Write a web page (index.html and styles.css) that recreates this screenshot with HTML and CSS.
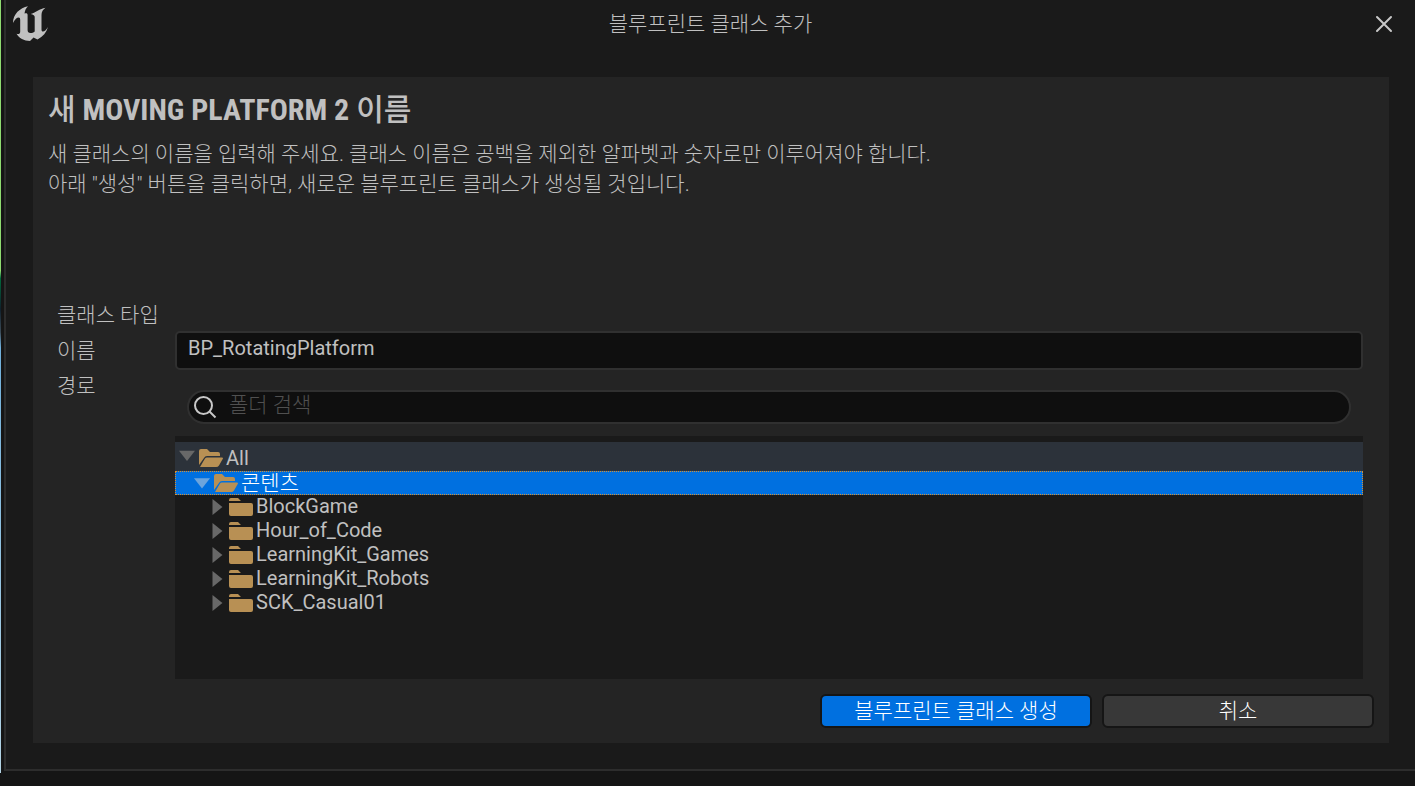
FILE: index.html
```
<!DOCTYPE html>
<html lang="ko">
<head>
  <meta charset="UTF-8">
  <meta name="viewport" content="width=device-width, initial-scale=1.0">
  <title>블루프린트 클래스 추가</title>
  <link rel="stylesheet" href="styles.css">
</head>
<body>
  <!-- shared icons -->
  <svg class="sprite" aria-hidden="true">
    <symbol id="folder" viewBox="0 0 24 18">
      <path d="M0 2Q0 0 2 0H9L12 3H0ZM0 5H22Q24 5 24 7V16Q24 18 22 18H2Q0 18 0 16Z"/>
    </symbol>
    <symbol id="folder-open" viewBox="0 0 24 18">
      <path d="M0 2Q0 0 2 0H8L11 3H19Q21 3 21 5V7H8Q6 7 5 9L0 16ZM8 8.5H23Q24.500 8.500 23.700 10L20 16.500Q19 18 17 18H1L6 9.500Q6.700 8.500 8 8.500Z"/>
    </symbol>
  </svg>

  <div class="window">
    <header class="titlebar">
      <svg class="logo" viewBox="0 0 35 36" aria-hidden="true">
        <path d="M15 0.300C7 2 0 8 0 17C2 13 4 11.500 5.500 11.500C6.800 11.500 7.200 12.300 7.200 14V25.500C7.200 28 5.500 28.500 3.500 27.800C6 32 11 35 17 35L20.500 31.500L24.500 33.500C30 30.500 33.500 26.500 35 21C33 24 31.500 25.500 30 25.500C29 25.500 28.500 25 28.500 23.500V9C28.500 6 30 3.500 32.500 1.800C27 2.500 22 7 17.700 8C20.500 8.500 21.700 9.500 21.700 11V25.500C20.500 26.500 19 27 17.500 27C15.500 27 14.600 26 14.600 24V9C14.600 7.300 13.500 6.800 11.500 7.500C12 4.500 13 2 15 0.300Z"/>
      </svg>
      <span class="caption">블루프린트 클래스 추가</span>
      <button class="close-button" type="button" aria-label="닫기">
        <svg viewBox="0 0 18 18"><path d="M2 2L16 16M16 2L2 16"/></svg>
      </button>
    </header>

    <form class="panel">
      <h1>새 <strong>MOVING PLATFORM 2</strong> 이름</h1>
      <p class="intro">
        새 클래스의 이름을 입력해 주세요. 클래스 이름은 공백을 제외한 알파벳과 숫자로만 이루어져야 합니다.<br>
        아래 "생성" 버튼을 클릭하면, 새로운 블루프린트 클래스가 생성될 것입니다.
      </p>

      <div class="fields">
        <span class="label type-label">클래스 타입</span>
        <label class="label" for="class-name">이름</label>
        <input class="name-input" id="class-name" type="text" value="BP_RotatingPlatform">
        <label class="label path-label" for="folder-search">경로</label>
        <div class="path-picker">
          <div class="search">
            <svg viewBox="0 0 24 24" aria-hidden="true"><circle cx="10.500" cy="10.500" r="8.500"/><path d="M16.500 16.500L22.500 22.500"/></svg>
            <input id="folder-search" type="text" placeholder="폴더 검색">
          </div>
          <ul class="tree">
            <li class="row root">
              <button class="arrow open" type="button" aria-label="All 접기"></button>
              <svg class="folder"><use href="#folder-open"/></svg><span>All</span>
            </li>
            <li class="row content selected">
              <button class="arrow open" type="button" aria-label="콘텐츠 접기"></button>
              <svg class="folder"><use href="#folder-open"/></svg><span>콘텐츠</span>
            </li>
            <li class="row child">
              <button class="arrow" type="button" aria-label="BlockGame 펼치기"></button>
              <svg class="folder"><use href="#folder"/></svg><span>BlockGame</span>
            </li>
            <li class="row child">
              <button class="arrow" type="button" aria-label="Hour_of_Code 펼치기"></button>
              <svg class="folder"><use href="#folder"/></svg><span>Hour_of_Code</span>
            </li>
            <li class="row child">
              <button class="arrow" type="button" aria-label="LearningKit_Games 펼치기"></button>
              <svg class="folder"><use href="#folder"/></svg><span>LearningKit_Games</span>
            </li>
            <li class="row child">
              <button class="arrow" type="button" aria-label="LearningKit_Robots 펼치기"></button>
              <svg class="folder"><use href="#folder"/></svg><span>LearningKit_Robots</span>
            </li>
            <li class="row child">
              <button class="arrow" type="button" aria-label="SCK_Casual01 펼치기"></button>
              <svg class="folder"><use href="#folder"/></svg><span>SCK_Casual01</span>
            </li>
          </ul>
        </div>
      </div>

      <div class="actions">
        <button class="button primary" type="button">블루프린트 클래스 생성</button>
        <button class="button" type="button">취소</button>
      </div>
    </form>
  </div>
</body>
</html>
```
FILE: styles.css
```
* {
  box-sizing: border-box;
}

body {
  margin: 0;
  min-height: 100vh;
  display: flex;
  flex-direction: column;
  padding-bottom: 15px;
  background: #151515;
  color: #c0c0c0;
  font-family: Roboto, "Noto Sans CJK KR", sans-serif;
  font-size: 21px;
  font-weight: 300;
  line-height: 30px;
}

/* editor viewport showing behind the window */
body::before {
  content: "";
  position: absolute;
  left: 0;
  top: 0;
  width: 1px;
  height: calc(100vh - 13px);
  background: linear-gradient(#8fdc70 35%, #00693c 36%, #10202c 40%, #3c4c58 43%, #70b0dc 45%, #b4d4e4);
}

button,
input {
  font: inherit;
  color: inherit;
}

.sprite {
  position: absolute;
  width: 0;
  height: 0;
}

.window {
  flex: 1;
  display: flex;
  flex-direction: column;
  margin-left: 4px;
  padding: 0 26px 26px 27px;
  border-left: 2px solid #2d2d2d;
  border-bottom: 2px solid #2d2d2d;
  background: #1a1a1a;
}

.titlebar {
  display: flex;
  align-items: center;
  justify-content: space-between;
  height: 48px;
  margin: 0 -6px 29px -20px;
}

.logo {
  width: 35px;
  height: 36px;
  fill: #c0c0c0;
}

.close-button {
  display: flex;
  padding: 2px;
  border: 0;
  background: none;
}

.close-button svg {
  width: 18px;
  height: 18px;
  fill: none;
  stroke: #c8c8c8;
  stroke-width: 2;
  stroke-linecap: round;
}

.panel {
  flex: 1;
  display: flex;
  flex-direction: column;
  padding: 14px 15px 15px;
  background: #242424;
}

h1 {
  margin: 0;
  font-family: "Roboto Condensed", "Liberation Sans Narrow", Roboto, "Noto Sans CJK KR", sans-serif;
  font-size: 30px;
  font-weight: 500;
  line-height: 38px;
}

h1 strong {
  font-weight: 700;
}

.intro {
  margin: 10px 0 100px;
}

.fields {
  flex: 1;
  display: grid;
  grid-template-columns: 118px 1fr;
  grid-template-rows: 31px 39px 1fr;
  row-gap: 1px;
  margin: 0 11px 0 9px;
}

.type-label {
  grid-column: 1 / 3;
}

.label {
  align-self: center;
}

.path-label {
  align-self: start;
}

.name-input {
  width: 100%;
  padding: 0 11px 5px;
  border: 2px solid #303030;
  border-radius: 5px;
  background: #0f0f0f;
  font-size: 20px;
  font-weight: 400;
  outline: 0;
}

.path-picker {
  display: flex;
  flex-direction: column;
  padding-top: 19px;
}

.search {
  display: flex;
  align-items: center;
  gap: 12px;
  height: 34px;
  margin: 0 12px 12px;
  padding: 0 16px 0 4px;
  border: 2px solid #303030;
  border-radius: 17px;
  background: #0f0f0f;
}

.search svg {
  flex: none;
  width: 24px;
  height: 24px;
  fill: none;
  stroke: #c8c8c8;
  stroke-width: 2;
}

.search input {
  flex: 1;
  min-width: 0;
  height: 30px;
  padding: 0 0 4px;
  border: 0;
  background: none;
  outline: 0;
}

.search input::placeholder {
  color: #505050;
  opacity: 1;
}

.tree {
  flex: 1;
  margin: 0;
  padding: 6px 0 0;
  list-style: none;
  background: #1a1a1a;
  font-size: 20px;
  font-weight: 400;
}

.row {
  display: flex;
  align-items: center;
  height: 24px;
  line-height: 24px;
}

.row span {
  padding-bottom: 2px;
}

.root {
  height: 29px;
  padding: 2px 0 0 4px;
  background: #2c323a;
}

.root span {
  padding: 0;
}

.content {
  padding-left: 18px;
}

.selected {
  border: 1px dotted #d89030;
  background: #0070e0;
  color: #fff;
  font-size: 21px;
  font-weight: 300;
}

.content span {
  padding: 0;
}

.child {
  padding-left: 34px;
}

.arrow {
  width: 16px;
  height: 16px;
  padding: 0;
  border: 0;
  background: #686868;
  clip-path: polygon(22% 0, 84% 50%, 22% 100%);
}

.arrow.open {
  clip-path: polygon(0 20%, 100% 20%, 50% 84%);
}

.root .arrow {
  margin-bottom: 4px;
}

.selected .arrow {
  background: #6ca4dc;
}

.folder {
  width: 24px;
  height: 18px;
  margin: 0 3px 0 4px;
  fill: #b89054;
}

.actions {
  display: flex;
  justify-content: flex-end;
  gap: 10px;
  margin-top: 15px;
}

.button {
  width: 272px;
  height: 34px;
  padding: 0;
  border: 2px solid #151515;
  border-radius: 6px;
  background: #383838;
  color: #fff;
  line-height: 28px;
}

.primary {
  background: #0070e0;
}
```
